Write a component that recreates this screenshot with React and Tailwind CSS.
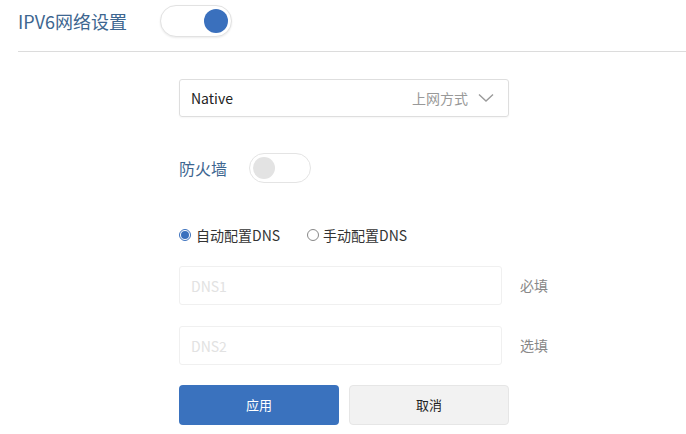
import React, { useState } from 'react';

const font = { fontFamily: '"Noto Sans CJK SC", "Noto Sans", sans-serif' };

const App = () => {
  const [ipv6, setIpv6] = useState(true);
  const [firewall, setFirewall] = useState(false);
  const [dnsMode, setDnsMode] = useState('auto');

  return (
    <div className="w-[686px] h-[434px] bg-white overflow-hidden" style={font}>
      {/* header */}
      <div className="ml-[18px] h-[52px] border-b border-[#dcdcdc] flex items-start pt-[5px]">
        <span className="text-[18px] leading-[32px] text-[#3d6690] w-[142px]">IPV6网络设置</span>
        <button
          onClick={() => setIpv6(!ipv6)}
          className="w-[72px] h-[32px] rounded-full border border-[#e2e2e2] bg-white shadow-[0_1px_2px_rgba(0,0,0,0.08)] flex items-center px-[3px] justify-end"
        >
          <span className="w-[24px] h-[24px] rounded-full bg-[#3a70bd]" />
        </button>
      </div>

      <div className="ml-[179px] w-[400px]">
        {/* wan type select */}
        <div className="mt-[27px] w-[330px] h-[38px] border border-[#dedede] rounded-[3px] flex items-center pl-[11px] pr-[14px] shadow-[0_1px_2px_rgba(0,0,0,0.04)]">
          <span className="text-[14px] text-[#222]">Native</span>
          <span className="ml-auto text-[14px] text-[#999]">上网方式</span>
          <svg className="ml-[10px]" width="16" height="10" viewBox="0 0 16 10" fill="none">
            <path d="M1 1.5 L8 8 L15 1.5" stroke="#9a9a9a" strokeWidth="1.4" />
          </svg>
        </div>

        {/* firewall */}
        <div className="mt-[36px] h-[30px] flex items-center">
          <span className="text-[16px] text-[#3d6690] w-[70px]">防火墙</span>
          <button
            onClick={() => setFirewall(!firewall)}
            className="w-[62px] h-[30px] rounded-full border border-[#e4e4e4] bg-white flex items-center px-[3px]"
          >
            <span className="w-[22px] h-[22px] rounded-full bg-[#e3e3e3]" />
          </button>
        </div>

        {/* dns mode */}
        <div className="mt-[41px] h-[22px] flex items-center text-[14px] text-[#333]">
          <label className="flex items-center cursor-pointer" onClick={() => setDnsMode('auto')}>
            <span className={`w-[12px] h-[12px] rounded-full border flex items-center justify-center ${dnsMode === 'auto' ? 'border-[#3a70bd]' : 'border-[#888]'}`}>
              {dnsMode === 'auto' && <span className="w-[8px] h-[8px] rounded-full bg-[#3a70bd]" />}
            </span>
            <span className="ml-[5px]">自动配置DNS</span>
          </label>
          <label className="flex items-center ml-[27px] cursor-pointer" onClick={() => setDnsMode('manual')}>
            <span className={`w-[12px] h-[12px] rounded-full border flex items-center justify-center ${dnsMode === 'manual' ? 'border-[#3a70bd]' : 'border-[#888]'}`}>
              {dnsMode === 'manual' && <span className="w-[8px] h-[8px] rounded-full bg-[#3a70bd]" />}
            </span>
            <span className="ml-[4px]">手动配置DNS</span>
          </label>
        </div>

        {/* dns inputs */}
        <div className="mt-[20px] flex items-center">
          <input
            disabled={dnsMode === 'auto'}
            placeholder="DNS1"
            className="w-[323px] shrink-0 h-[39px] border border-[#f0f0f0] rounded-[3px] px-[11px] text-[14px] bg-white placeholder:text-[#e2e2e2] outline-none"
          />
          <span className="ml-[18px] text-[14px] text-[#888] whitespace-nowrap">必填</span>
        </div>
        <div className="mt-[21px] flex items-center">
          <input
            disabled={dnsMode === 'auto'}
            placeholder="DNS2"
            className="w-[323px] shrink-0 h-[39px] border border-[#f0f0f0] rounded-[3px] px-[11px] text-[14px] bg-white placeholder:text-[#e2e2e2] outline-none"
          />
          <span className="ml-[18px] text-[14px] text-[#888] whitespace-nowrap">选填</span>
        </div>

        {/* actions */}
        <div className="mt-[20px] flex gap-[10px]">
          <button className="w-[160px] h-[40px] rounded-[4px] bg-[#3a72be] text-white text-[13px]">应用</button>
          <button className="w-[160px] h-[40px] rounded-[4px] bg-[#f2f2f2] border border-[#e6e6e6] text-[#222] text-[13px]">取消</button>
        </div>
      </div>
    </div>
  );
};

export default App;
